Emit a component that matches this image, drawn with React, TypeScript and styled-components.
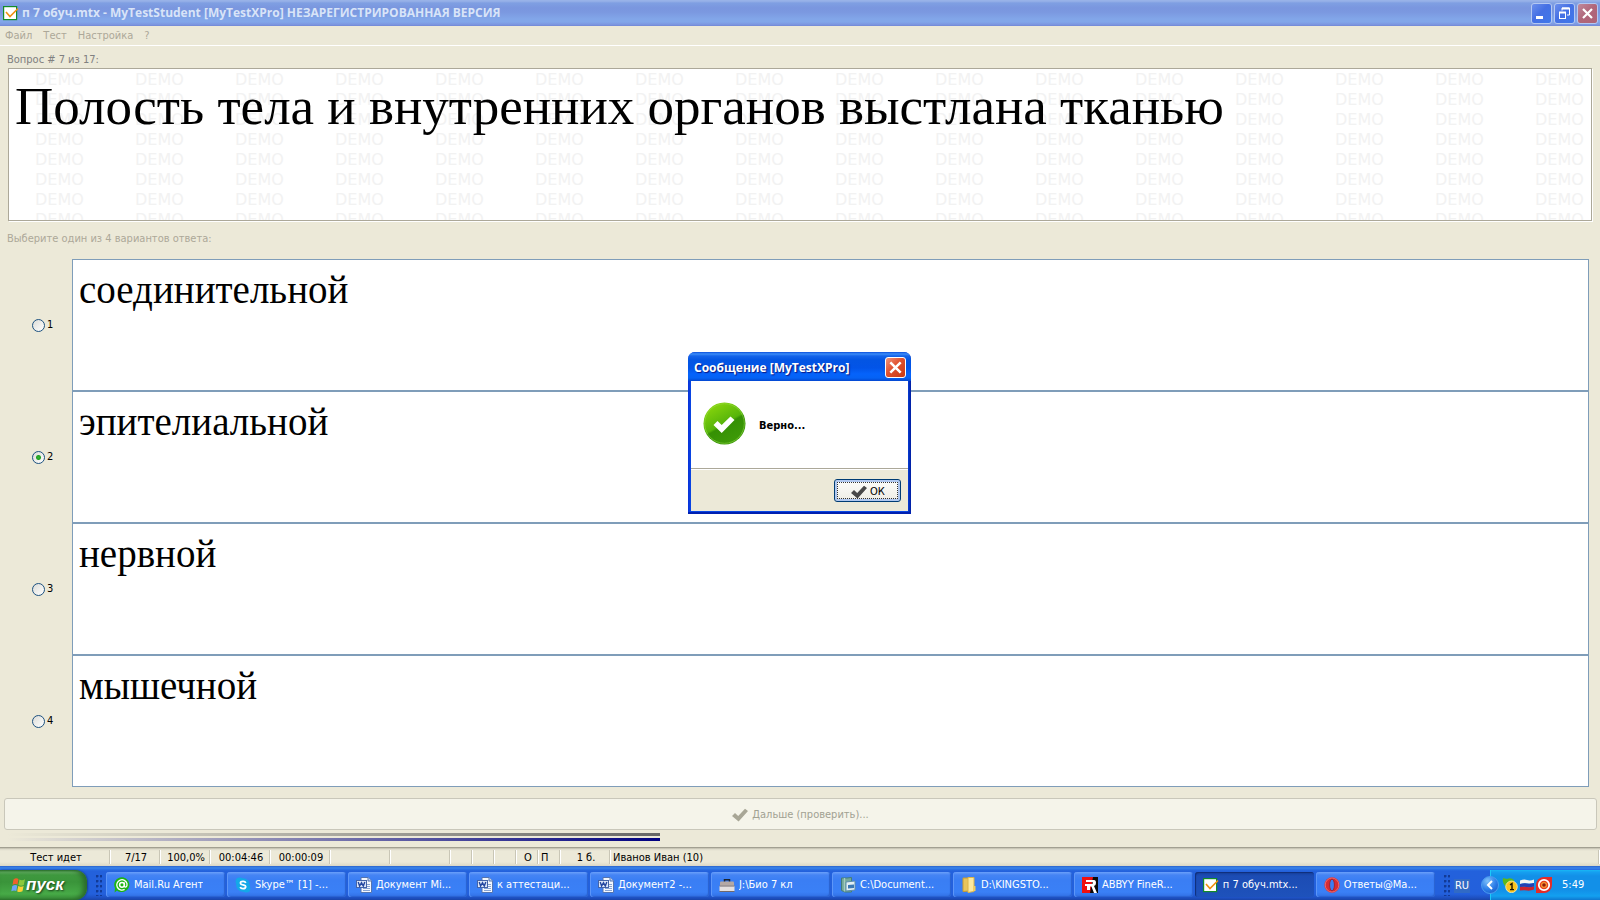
import React, { useState } from "react";
import styled, { createGlobalStyle, css } from "styled-components";

const UI_FONT = '"DejaVu Sans Condensed", "DejaVu Sans", sans-serif';
const CAPTION_FONT = '"Open Sans", "Noto Sans", sans-serif';
const FACE = "#ece9d8";
const EDGE = "#aca899";
const FIELD_EDGE = "#7f9db9";

const GlobalStyle = createGlobalStyle`
  *, *::before, *::after { box-sizing: border-box; }
  body { margin: 0; background: ${FACE}; font: 11px/14px ${UI_FONT}; color: #000; }
  button, input { font: inherit; margin: 0; padding: 0; }
`;

const Desktop = styled.div`
  display: flex;
  flex-direction: column;
  min-height: 100vh;
`;

const AppWindow = styled.main`
  position: relative;
  flex: 1;
  display: flex;
  flex-direction: column;
  background: ${FACE};
`;

/* Main window caption */
const TitleBar = styled.header`
  display: flex;
  align-items: center;
  height: 26px;
  padding: 0 2px 0 3px;
  gap: 2px;
  background: linear-gradient(#98b2e8 0, #98b2e8 1px, #7f9fe2 3px, #7a96df 8px, #7b98e0 12px, #82a6e9 19px, #82a6e9 22px, #7b93de 25px, #6f86d4 26px);
`;

const TitleText = styled.h1`
  flex: 1;
  margin: 0 0 0 1px;
  font: bold 12px/20px ${CAPTION_FONT};
  color: #d8e4f8;
  white-space: nowrap;
`;

const CaptionButton = styled.button<{ $tone: "blue" | "dim" | "red" }>`
  display: grid;
  place-items: center;
  width: 21px;
  height: 21px;
  border-radius: 3px;
  border: 1px solid #b4c8f2;
  ${({ $tone }) =>
    $tone === "blue" &&
    css`background: linear-gradient(135deg, #6c8fec, #4570e4 45%, #3f78ea);`}
  ${({ $tone }) =>
    $tone === "dim" &&
    css`background: linear-gradient(135deg, #c08a9c, #b0667a 50%, #ae6478);`}
  ${({ $tone }) =>
    $tone === "red" &&
    css`
      border-color: #fff;
      background: linear-gradient(135deg, #f0957c, #e0512f 45%, #c83a14);
    `}
`;

/* Menu */
const MenuBar = styled.nav`
  display: flex;
  height: 20px;
  padding: 3px 5px 0;
  gap: 11px;
  border-bottom: 1px solid #fff;
`;

const MenuItem = styled.button`
  height: 14px;
  border: 0;
  background: none;
  color: ${EDGE};
`;

const Caption = styled.p<{ $tone: string }>`
  margin: 0;
  color: ${({ $tone }) => $tone};
`;

const QuestionArea = styled.section`
  padding: 7px 8px 0 7px;
`;

const QuestionBox = styled.div`
  position: relative;
  height: 153px;
  margin: 1px 0 11px 1px;
  padding: 7px 6px;
  overflow: hidden;
  background: #fff;
  border: 1px solid ${EDGE};
  box-shadow: 1px 1px 0 #fff;
`;

const QuestionText = styled.h2`
  position: relative;
  margin: 0;
  font: 53px/60px "Liberation Serif", serif;
`;

const Watermark = styled.div`
  position: absolute;
  inset: 0;
  padding: 1px 0 0 26px;
  overflow: hidden;
  color: #f2f2f2;
  font: 16px/20px "DejaVu Sans", sans-serif;
`;

const WatermarkRow = styled.div`
  display: flex;
`;

const WatermarkWord = styled.span`
  flex: 0 0 100px;
`;

/* Answers */
const AnswerList = styled.div`
  flex: 1;
  display: flex;
  flex-direction: column;
  padding: 13px 11px 11px 0;
`;

const AnswerRow = styled.label`
  flex: 1;
  display: flex;
  align-items: stretch;
  min-height: 60px;
`;

const AnswerMark = styled.span`
  display: flex;
  align-items: center;
  gap: 2px;
  width: 72px;
  padding-left: 32px;
`;

const Radio = styled.input`
  appearance: none;
  width: 13px;
  height: 13px;
  border: 1px solid #1c5180;
  border-radius: 50%;
  background: linear-gradient(135deg, #dcdcd7, #fff);
  &:checked {
    background: radial-gradient(circle, #35b535 0, #21a121 2px, transparent 3px),
      linear-gradient(135deg, #dcdcd7, #fff);
  }
`;

const AnswerText = styled.span`
  flex: 1;
  padding: 7px 6px;
  background: #fff;
  border: 1px solid ${FIELD_EDGE};
  font: 39px/46px "Liberation Serif", serif;
`;

const NextButton = styled.button`
  display: flex;
  align-items: center;
  justify-content: center;
  gap: 4px;
  height: 32px;
  margin: 0 3px 0 4px;
  padding-top: 2px;
  color: #a1a192;
  background: #f5f4ea;
  border: 1px solid #c9c7ba;
  border-radius: 3px;
`;

const ProgressTrack = styled.div`
  display: flex;
  flex-direction: column;
  gap: 2px;
  padding: 3px 8px 6px;
`;

const ProgressFill = styled.div<{ $color: string }>`
  height: 3px;
  background: linear-gradient(90deg, ${FACE}, ${({ $color }) => $color});
`;

/* Status bar */
const StatusBar = styled.footer`
  display: flex;
  align-items: stretch;
  height: 19px;
  padding: 3px 1px 2px 0;
  background: linear-gradient(#8f8d80 0, #b5b2a2 1px, #dcd9c9 2px, ${FACE} 4px, ${FACE} 15px, #dbd8c6 19px);
`;

const StatusCell = styled.span<{ $width?: number; $start?: boolean }>`
  flex: ${({ $width }) => ($width ? `0 0 ${$width}px` : "1")};
  text-align: ${({ $start }) => ($start ? "left" : "center")};
  height: 14px;
  padding: 1px 0 0 3px;
  border-right: 1px solid #c9c6b6;
  box-shadow: 1px 0 0 #fff;
  line-height: 13px;
  white-space: nowrap;
`;

/* Message box */
const DialogLayer = styled.div`
  position: absolute;
  inset: 0;
  display: grid;
  place-items: center;
  padding-right: 1px;
`;

const Dialog = styled.section`
  width: 223px;
  padding: 0 3px 3px;
  border-radius: 7px 7px 0 0;
  background: linear-gradient(90deg, #0831d9, #0a48e4 3px, #0a48e4 219px, #001da0);
  box-shadow: inset 0 -2px 0 #0020b0;
  overflow: hidden;
`;

const DialogTitleBar = styled.header`
  display: flex;
  align-items: center;
  justify-content: space-between;
  height: 29px;
  margin: 0 -3px;
  padding: 2px 5px 0 6px;
  background: linear-gradient(#0a4fdc 0, #3b8cf8 2px, #1464ea 4px, #0355e3 8px, #0254e8 16px, #0563fb 22px, #0562f4 26px, #0347d0 29px);
`;

const DialogTitle = styled.h2`
  margin: 0;
  font: bold 12px/20px ${CAPTION_FONT};
  color: #fff;
  text-shadow: 1px 1px 1px #0a1883;
  white-space: nowrap;
`;

const DialogBody = styled.div`
  display: flex;
  align-items: center;
  gap: 13px;
  height: 87px;
  padding: 0 0 2px 12px;
  background: #fff;
`;

const DialogMessage = styled.p`
  margin: 4px 0 0;
  font-weight: bold;
`;

const DialogFooter = styled.div`
  display: flex;
  justify-content: flex-end;
  height: 43px;
  padding: 10px 7px 9px;
  background: ${FACE};
  border-top: 1px solid ${EDGE};
  box-shadow: inset 0 1px 0 #fff;
`;

const OkButton = styled.button`
  display: flex;
  align-items: center;
  justify-content: center;
  gap: 3px;
  width: 67px;
  height: 23px;
  padding: 2px 0 0 1px;
  border: 1px solid #003c74;
  border-radius: 3px;
  background: linear-gradient(#fdfdfb, #f0efe8 85%, #dcd7cb);
  box-shadow: inset 0 0 0 2px #b0c8f0;
  outline: 1px dotted #333;
  outline-offset: -4px;
`;

/* Taskbar */
const Taskbar = styled.nav`
  display: flex;
  align-items: stretch;
  height: 34px;
  color: #fff;
  background: linear-gradient(#2a63cc 0, #3a86ec 2px, #2e74e4 3px, #2361dc 5px, #2360dc 28px, #1d4fc0 32px, #1a44a8 34px);
`;

const StartButton = styled.button`
  display: flex;
  align-items: center;
  width: 87px;
  height: 30px;
  margin-top: 4px;
  padding-left: 11px;
  border: 0;
  border-radius: 0 12px 12px 0;
  color: #fff;
  font: italic bold 17px/20px "Liberation Sans", sans-serif;
  text-shadow: 1px 1px 2px #1a3d1a;
  background: linear-gradient(#2c742c 0, #5fac5f 2px, #3f993f 5px, #3a943a 12px, #47aa47 24px, #3c963c 28px, #2d7a2d 30px);
  box-shadow: inset -4px 0 5px #2b6b2b, 1px 0 2px #153f92;
`;

const Grip = styled.span`
  width: 6px;
  margin: 9px 4px 4px 9px;
  background: radial-gradient(circle at 1px 1px, #123a96 1px, transparent 2px) 0 0 / 4px 5px;
`;

const TaskList = styled.div`
  flex: 1;
  display: flex;
  gap: 2px;
  min-width: 0;
  padding: 6px 0 3px;
`;

const TaskButton = styled.button<{ $active?: boolean }>`
  flex: 1 1 0;
  display: flex;
  align-items: center;
  gap: 4px;
  min-width: 0;
  padding: 1px 8px 0;
  border: 0;
  border-radius: 3px;
  color: #fff;
  white-space: nowrap;
  background: ${({ $active }) =>
    $active
      ? "linear-gradient(#163f9c, #1c4cb4 4px, #1e52bb)"
      : "linear-gradient(#6ba0fa, #4584f4 3px, #3a7ef4 8px, #3a80f6 80%, #3270e4)"};
  box-shadow: ${({ $active }) =>
    $active ? "inset 1px 1px 1px #102e78" : "inset 1px 0 0 #5d96f8, inset -1px -1px 1px #2a62d0"};
`;

const TaskLabel = styled.span`
  overflow: hidden;
`;

const Language = styled.span`
  align-self: center;
  margin: 5px 20px 0 0;
  padding: 0 1px;
  background: #316ac5;
`;

const Tray = styled.div`
  display: flex;
  align-items: center;
  gap: 1px;
  width: 110px;
  margin-top: 4px;
  background: linear-gradient(#18b8f4 0, #16a0f0 2px, #1290e8 6px, #1290e8 20px, #13a0f0 26px, #0f78d0 30px);
  border-left: 1px solid #1ccaf8;
`;

const TrayToggle = styled.button`
  display: grid;
  place-items: center;
  width: 18px;
  height: 18px;
  margin: 0 2px 0 -10px;
  border: 1px solid #4a9cf0;
  border-radius: 50%;
  background: radial-gradient(circle at 35% 25%, #7ec0fa, #2a7ce8 55%, #1450b8);
`;

const Clock = styled.time`
  margin-left: 9px;
`;

const CheckMark = ({ color }: { color: string }) => (
  <svg width="16" height="14" viewBox="0 0 16 14" aria-hidden="true">
    <path d="M0 8 L3 5 L6.2 8 L13 0.8 L16 3 L6.6 13.4 Z" fill={color} />
  </svg>
);

const CloseGlyph = ({ size = 13 }: { size?: number }) => (
  <svg width={size} height={size} viewBox="0 0 13 13" aria-hidden="true">
    <path d="M2 2 L11 11 M11 2 L2 11" stroke="#fff" strokeWidth="2.2" />
  </svg>
);

const TestIcon = () => (
  <svg width="16" height="16" viewBox="0 0 16 16" aria-hidden="true">
    <rect x="0.6" y="1.6" width="13" height="13" fill="#fff" stroke="#148c28" strokeWidth="1.2" />
    <path d="M3 7 L7 11.5 L15 3.5" fill="none" stroke="#f09010" strokeWidth="1.6" />
  </svg>
);

const SuccessIcon = () => (
  <svg width="43" height="43" viewBox="0 0 43 43" aria-hidden="true">
    <defs>
      <linearGradient id="ok" x1="0.2" y1="0" x2="0.75" y2="1">
        <stop offset="0" stopColor="#8cd80c" />
        <stop offset="0.5" stopColor="#56b40a" />
        <stop offset="0.55" stopColor="#359004" />
        <stop offset="1" stopColor="#3f9c08" />
      </linearGradient>
    </defs>
    <circle cx="21.5" cy="21.5" r="21" fill="url(#ok)" />
    <circle cx="21.5" cy="21.5" r="19.8" fill="none" stroke="#9ce050" strokeOpacity="0.5" />
    <path d="M10.5 23 L14.5 19 L18.7 23 L27.5 14.5 L31.5 18 L18.7 31 Z" fill="#fff" />
  </svg>
);

const WindowsFlag = () => (
  <svg width="15" height="16" viewBox="0 0 15 16" aria-hidden="true">
    <path d="M2.5 2.5 Q5 0.5 7.5 2 L6.5 7.5 Q4 6.3 1.5 8 Z" fill="#f0602c" />
    <path d="M8.4 2.5 Q11 4 14 2.3 L12.8 8 Q10 9.4 7.4 7.9 Z" fill="#8cc83c" />
    <path d="M1.3 9 Q4 7.3 6.3 8.6 L5.3 14 Q3 12.8 0.3 14.3 Z" fill="#6ca4f8" />
    <path d="M7.2 9 Q10 10.5 12.6 9 L11.5 14.3 Q9 15.8 6.2 14.4 Z" fill="#fcd034" />
  </svg>
);

const IconFrame = styled.svg`
  flex-shrink: 0;
`;

const Icon16 = ({ children }: { children: React.ReactNode }) => (
  <IconFrame width="16" height="16" viewBox="0 0 16 16" aria-hidden="true">
    {children}
  </IconFrame>
);

const AgentIcon = () => (
  <Icon16>
    <path d="M8 0.3 A7.7 7.4 0 1 1 3 13.6 L0.6 15.6 L1 11 A7.7 7.4 0 0 1 8 0.3 Z" fill="#1cb414" />
    <circle cx="8" cy="7.8" r="2.4" fill="none" stroke="#fff" strokeWidth="1.5" />
    <path d="M10.4 5.4 V8.8 Q10.6 10.4 12 10 Q13.4 9 13 6.6 A5.2 5.2 0 1 0 10.6 12.4" fill="none" stroke="#fff" strokeWidth="1.3" />
  </Icon16>
);

const SkypeIcon = () => (
  <Icon16>
    <circle cx="8" cy="8" r="6.8" fill="#14a8e8" />
    <circle cx="4.6" cy="4.6" r="4" fill="#14a8e8" />
    <circle cx="11.4" cy="11.4" r="4" fill="#14a8e8" />
    <path d="M10.8 5.8 Q10 4.2 8 4.3 Q5.3 4.4 5.5 6.2 Q5.6 7.5 8 7.9 Q10.8 8.4 10.7 9.9 Q10.4 11.7 8 11.7 Q5.8 11.7 5.2 10" fill="none" stroke="#fff" strokeWidth="1.8" />
  </Icon16>
);

const WordIcon = () => (
  <Icon16>
    <path d="M5 0.5 H12 L15.5 4 V15.5 H5 Z" fill="#f4f7fd" stroke="#5474b0" />
    <path d="M12 0.5 V4 H15.5" fill="#c4d4f0" stroke="#5474b0" />
    <path d="M10 7.5 H14 M10 9.5 H14 M7 11.5 H14 M7 13.5 H14" stroke="#88a4d4" />
    <rect x="0.5" y="3.5" width="10" height="7" fill="#dce6f8" stroke="#4464a8" />
    <path d="M2.2 5 L3.6 9 L5.5 5.6 L7.3 9 L8.8 5" fill="none" stroke="#2448a0" strokeWidth="1.4" />
  </Icon16>
);

const CaseIcon = () => (
  <Icon16>
    <path d="M5.5 5 V2.8 H10.5 V5" fill="none" stroke="#1c2430" strokeWidth="1.5" />
    <rect x="1" y="4.5" width="14" height="5" rx="1" fill="#b4a8a4" />
    <rect x="0.5" y="8.5" width="15" height="6" rx="1" fill="#e4e0e0" />
    <path d="M0.5 9 H15.5 M0.5 14.5 H15.5" stroke="#70686c" />
  </Icon16>
);

const LibraryIcon = () => (
  <Icon16>
    <path d="M1.5 1 H7 L11.5 0.5 V15 H5 L1.5 13.5 Z" fill="#74a89c" stroke="#447c78" />
    <path d="M4.5 1 V14.5" stroke="#a4ccbc" strokeWidth="1.4" />
    <path d="M6 5 L15 4 V13 L6 14 Z" fill="#e4f0f4" stroke="#5c8cac" />
    <path d="M8 8 L14 7.4 V11 L8 11.6 Z" fill="#3c78b4" />
  </Icon16>
);

const FolderIcon = () => (
  <Icon16>
    <path d="M2 1 H8 V14 L2 14.5 Z" fill="#e8c45c" stroke="#c89c30" />
    <path d="M7 0.5 H13 V14.5 L7 15.5 Z" fill="#fbe8a0" stroke="#dcb448" />
    <path d="M12 9 H14.5 V14 H12 Z" fill="#f0cc60" />
  </Icon16>
);

const FineReaderIcon = () => (
  <Icon16>
    <rect width="16" height="16" fill="#0a0a0a" />
    <path d="M0 0 H11 L8 16 H0 Z" fill="#f01010" />
    <path d="M4 3 H12 Q14 3 14 6 Q14 8.5 12 9 L15 16 H12 L9.4 9.5 H8 V13 H5 V9 H3 V7 H9 Q11 7 11 6 Q11 5 9.5 5 H4 Z" fill="#fff" />
  </Icon16>
);

const OperaIcon = () => (
  <Icon16>
    <ellipse cx="8" cy="8" rx="7.6" ry="7.8" fill="#d42c34" />
    <ellipse cx="8" cy="8" rx="6.8" ry="7" fill="none" stroke="#f07878" strokeWidth="0.8" />
    <ellipse cx="8" cy="8" rx="2.4" ry="5.8" fill="#3a7ef4" stroke="#a01820" strokeWidth="0.8" />
  </Icon16>
);

const AgentTrayIcon = () => (
  <Icon16>
    <path d="M1 1 L5 2 Q9 0 12 3 L12 9 H3 Q0 5 1 1 Z" fill="#5cb81c" />
    <circle cx="9.5" cy="9.8" r="5.8" fill="#fcc41c" stroke="#fff0b0" strokeWidth="0.8" />
    <path d="M8 7.8 L10 6.6 V12.6 M8 12.6 H12" fill="none" stroke="#1c1400" strokeWidth="1.4" />
  </Icon16>
);

const FlagIcon = () => (
  <Icon16>
    <path d="M1 3.5 Q5 2 8 3 T15 2.5 V6 Q11 7 8 6.5 T1 7 Z" fill="#f4f4f4" />
    <path d="M1 7 Q5 6 8 6.5 T15 6 V9.5 Q11 10.5 8 10 T1 10 Z" fill="#2440b4" />
    <path d="M1 10 Q5 9.5 8 10 T15 9.5 V12.5 Q11 14 8 13.5 T1 13.5 Z" fill="#cc2430" />
  </Icon16>
);

const ShieldIcon = () => (
  <Icon16>
    <path d="M8 0 H16 V8 A8 8 0 0 1 8 16 H0 V8 A8 8 0 0 1 8 0 Z" fill="#e42c28" />
    <circle cx="8" cy="8" r="5.2" fill="#e8401c" stroke="#fff" strokeWidth="1.8" />
    <circle cx="8" cy="8" r="2.4" fill="#8c1c0c" stroke="#f89830" strokeWidth="1.2" />
  </Icon16>
);

const menu = ["Файл", "Тест", "Настройка", "?"];
const answers = ["соединительной", "эпителиальной", "нервной", "мышечной"];
const statusCells: { text?: string; width?: number; start?: boolean }[] = [
  { text: "Тест идет", width: 110 },
  { text: "7/17", width: 50 },
  { text: "100,0%", width: 50 },
  { text: "00:04:46", width: 60 },
  { text: "00:00:09", width: 60 },
  { width: 60 },
  { width: 60 },
  { width: 22 },
  { width: 22 },
  { width: 22 },
  { text: "О", width: 22 },
  { text: "П", width: 22, start: true },
  { text: "1 б.", width: 50 },
  { text: "Иванов Иван (10)", start: true },
];
const tasks: { label: string; icon: React.ReactNode; active?: boolean }[] = [
  { label: "Mail.Ru Агент", icon: <AgentIcon /> },
  { label: "Skype™ [1] -...", icon: <SkypeIcon /> },
  { label: "Документ Mi...", icon: <WordIcon /> },
  { label: "к аттестаци...", icon: <WordIcon /> },
  { label: "Документ2 -...", icon: <WordIcon /> },
  { label: "J:\\Био 7 кл", icon: <CaseIcon /> },
  { label: "C:\\Document...", icon: <LibraryIcon /> },
  { label: "D:\\KINGSTO...", icon: <FolderIcon /> },
  { label: "ABBYY FineR...", icon: <FineReaderIcon /> },
  { label: "п 7 обуч.mtx...", icon: <TestIcon />, active: true },
  { label: "Ответы@Ma...", icon: <OperaIcon /> },
];

const progress = `${(7 / 17) * 100}%`;

export default function App() {
  const [selected, setSelected] = useState(1);
  const [open, setOpen] = useState(true);
  const close = () => setOpen(false);

  return (
    <Desktop>
      <GlobalStyle />
      <AppWindow>
        <TitleBar>
          <TestIcon />
          <TitleText>п 7 обуч.mtx - MyTestStudent [MyTestXPro] НЕЗАРЕГИСТРИРОВАННАЯ ВЕРСИЯ</TitleText>
          <CaptionButton $tone="blue" aria-label="Свернуть">
            <svg width="13" height="13" viewBox="0 0 13 13">
              <rect x="1" y="9" width="7" height="3" fill="#fff" />
            </svg>
          </CaptionButton>
          <CaptionButton $tone="blue" aria-label="Восстановить">
            <svg width="13" height="13" viewBox="0 0 13 13" fill="none" stroke="#fff">
              <path d="M4 3.5 V1 H11.5 V8 H9" />
              <path d="M4 1.5 H11.5" strokeWidth="2" />
              <rect x="1.5" y="5.5" width="6" height="6" />
              <path d="M1 5.5 H8" strokeWidth="2" />
            </svg>
          </CaptionButton>
          <CaptionButton $tone="dim" aria-label="Закрыть">
            <CloseGlyph />
          </CaptionButton>
        </TitleBar>
        <MenuBar>
          {menu.map((item) => (
            <MenuItem key={item} disabled>{item}</MenuItem>
          ))}
        </MenuBar>
        <QuestionArea>
          <Caption $tone="#808080">Вопрос # 7 из 17:</Caption>
          <QuestionBox>
            <Watermark aria-hidden="true">
              {Array.from({ length: 8 }, (_, row) => (
                <WatermarkRow key={row}>
                  {Array.from({ length: 16 }, (_, col) => (
                    <WatermarkWord key={col}>DEMO</WatermarkWord>
                  ))}
                </WatermarkRow>
              ))}
            </Watermark>
            <QuestionText>Полость тела и внутренних органов выстлана тканью</QuestionText>
          </QuestionBox>
          <Caption $tone={EDGE}>Выберите один из 4 вариантов ответа:</Caption>
        </QuestionArea>
        <AnswerList role="radiogroup" aria-label="Варианты ответа">
          {answers.map((text, i) => (
            <AnswerRow key={text}>
              <AnswerMark>
                <Radio type="radio" name="answer" checked={selected === i} onChange={() => setSelected(i)} />
                {i + 1}
              </AnswerMark>
              <AnswerText>{text}</AnswerText>
            </AnswerRow>
          ))}
        </AnswerList>
        <NextButton disabled>
          <CheckMark color="#a8a696" />
          Дальше (проверить)...
        </NextButton>
        <ProgressTrack>
          <ProgressFill $color="#666666" style={{ width: progress }} />
          <ProgressFill $color="#000080" style={{ width: progress }} />
        </ProgressTrack>
        <StatusBar>
          {statusCells.map(({ text, width, start }, i) => (
            <StatusCell key={i} $width={width} $start={start}>{text}</StatusCell>
          ))}
        </StatusBar>
        {open && (
          <DialogLayer>
            <Dialog role="dialog" aria-labelledby="dialog-title">
              <DialogTitleBar>
                <DialogTitle id="dialog-title">Сообщение [MyTestXPro]</DialogTitle>
                <CaptionButton $tone="red" aria-label="Закрыть сообщение" onClick={close}>
                  <CloseGlyph size={15} />
                </CaptionButton>
              </DialogTitleBar>
              <DialogBody>
                <SuccessIcon />
                <DialogMessage>Верно...</DialogMessage>
              </DialogBody>
              <DialogFooter>
                <OkButton onClick={close}>
                  <CheckMark color="#484848" />
                  ОК
                </OkButton>
              </DialogFooter>
            </Dialog>
          </DialogLayer>
        )}
      </AppWindow>
      <Taskbar>
        <StartButton>
          <WindowsFlag />
          пуск
        </StartButton>
        <Grip />
        <TaskList>
          {tasks.map(({ label, icon, active }) => (
            <TaskButton key={label} $active={active}>
              {icon}
              <TaskLabel>{label}</TaskLabel>
            </TaskButton>
          ))}
        </TaskList>
        <Grip />
        <Language>RU</Language>
        <Tray>
          <TrayToggle aria-label="Показать скрытые значки">
            <svg width="10" height="10" viewBox="0 0 10 10">
              <path d="M7 1 L3 5 L7 9" fill="none" stroke="#fff" strokeWidth="2" />
            </svg>
          </TrayToggle>
          <AgentTrayIcon />
          <FlagIcon />
          <ShieldIcon />
          <Clock>5:49</Clock>
        </Tray>
      </Taskbar>
    </Desktop>
  );
}
